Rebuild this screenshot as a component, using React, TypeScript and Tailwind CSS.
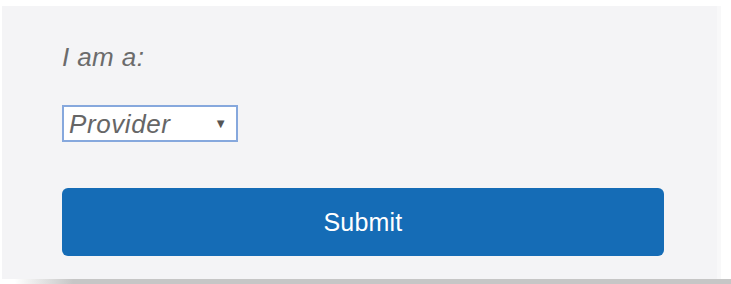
const ROLES = ["Provider", "Patient", "Caregiver"];

export default function App() {
  return (
    <div className="w-[731px] h-[284px] bg-white flex flex-col overflow-hidden font-['Liberation_Sans',Arial,sans-serif]">
      {/* form panel */}
      <div className="mt-[6px] ml-[2px] w-[719px] h-[273px] bg-[#f4f4f6] border-r-[4px] border-[#f8f8f9] pl-[60px] pt-[36px]">
        <p className="text-[26px] leading-[30px] italic tracking-[0.4px] text-[#6b6b6b]">I am a:</p>

        <div className="mt-[33px] w-[176px] h-[37px] bg-white border-2 border-[#86a8dd] flex items-center justify-between pl-[5px] pr-[9px]">
          <span className="text-[26px] leading-[30px] italic tracking-[0.6px] text-[#666]">{ROLES[0]}</span>
          <span className="text-[13px] text-[#555]">▼</span>
        </div>

        <button className="mt-[46px] w-[602px] h-[68px] rounded-[6px] bg-[#156cb6] text-white text-[25px] leading-[30px] tracking-[0.2px] flex items-center justify-center">
          Submit
        </button>
      </div>

      {/* shadow strip under the panel */}
      <div className="h-[5px] bg-gradient-to-r from-[#ffffff] from-[2%] to-[#c6c6c6] to-[10%]" />
    </div>
  );
}
